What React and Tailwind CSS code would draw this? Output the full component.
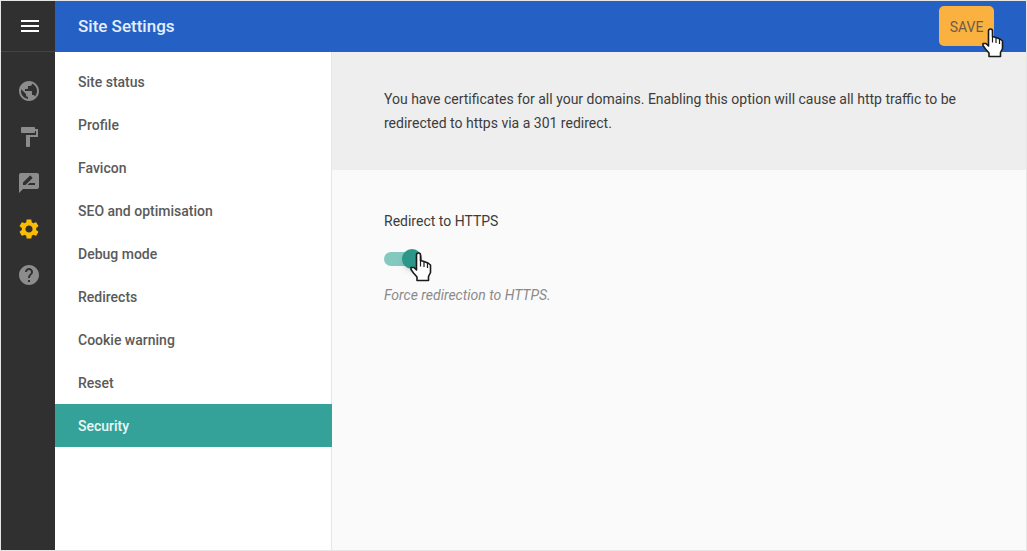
import React, { useState } from "react";
import { MdMenu, MdPublic, MdFormatPaint, MdRateReview, MdSettings, MdHelp } from "react-icons/md";

const tools = [
  { label: "Site", Icon: MdPublic },
  { label: "Design", Icon: MdFormatPaint },
  { label: "Content", Icon: MdRateReview },
  { label: "Settings", Icon: MdSettings },
  { label: "Help", Icon: MdHelp },
];

const sections = [
  "Site status",
  "Profile",
  "Favicon",
  "SEO and optimisation",
  "Debug mode",
  "Redirects",
  "Cookie warning",
  "Reset",
  "Security",
];

function HandPointer({ className }) {
  return (
    <svg viewBox="0 0 22 30" aria-hidden="true" className={`pointer-events-none absolute h-[30px] w-[22px] ${className}`}>
      <path
        d="M6.500 17V3Q6.500 1 8.500 1T10.500 3V8.500L14 9.500L18 11L20.500 13V20.500L18.500 24.500V28.500H7V25L3.500 21L1 17.500V15.500H4L6.500 18Z"
        fill="#fff"
        stroke="#1a1a1a"
        strokeWidth="1.600"
        strokeLinejoin="round"
      />
      <path d="M10.500 8.500V14.500M14 10V15M17.500 11V16" fill="none" stroke="#1a1a1a" strokeWidth="1.200" />
    </svg>
  );
}

export default function App() {
  const [active, setActive] = useState("Security");
  const [https, setHttps] = useState(true);

  return (
    <div className="flex min-h-screen border border-[#e6e6e6] bg-white font-['Roboto',sans-serif] text-sm text-[#3c3c3c]">
      <nav aria-label="Main" className="flex w-[54px] shrink-0 flex-col bg-[#303030]">
        <button type="button" aria-label="Menu" className="flex h-[51px] items-center justify-center border-b border-[#444] pl-1 text-white">
          <MdMenu className="size-6" />
        </button>
        <ul className="flex flex-col items-center gap-[22px] pt-[27px] pl-0.5">
          {tools.map(({ label, Icon }) => (
            <li key={label}>
              <a href="#" aria-label={label} className={label === "Settings" ? "block text-[#fbbc05]" : "block text-[#8c8c8c]"}>
                <Icon className="size-6" />
              </a>
            </li>
          ))}
        </ul>
      </nav>

      <div className="flex min-w-0 grow flex-col">
        <header className="flex h-[51px] items-center justify-between bg-[#2561c5] pr-8 pl-[23px]">
          <h1 className="text-[17px] font-medium text-[#e6eefb]">Site Settings</h1>
          <div className="relative pb-0.5">
            <button type="button" className="block h-10 w-[55px] rounded-[5px] bg-[#fbb140] pt-0.5 text-sm text-[#6b5c48]">SAVE</button>
            <HandPointer className="top-[22px] left-[43px]" />
          </div>
        </header>

        <div className="flex grow">
          <nav aria-label="Settings sections" className="w-[277px] shrink-0 border-r border-[#e6e6e6] pt-2">
            <ul>
              {sections.map((name) => (
                <li key={name}>
                  <a
                    href="#"
                    onClick={() => setActive(name)}
                    aria-current={active === name ? "page" : undefined}
                    className={
                      active === name
                        ? "-mr-px flex h-[43px] items-center bg-[#35a29a] pl-[23px] font-medium text-[#e9f8f6]"
                        : "flex h-[43px] items-center pl-[23px] font-medium text-[#5a5a5a]"
                    }
                  >
                    {name}
                  </a>
                </li>
              ))}
            </ul>
          </nav>

          <main className="min-w-0 grow bg-[#fafafa]">
            <p className="bg-[#eee] px-[52px] py-[35px] leading-6">
              You have certificates for all your domains. Enabling this option will cause all http traffic to be redirected to https via a 301 redirect.
            </p>
            <div className="flex flex-col items-start px-[52px] pt-[39px]">
              <label htmlFor="https" className="leading-6">Redirect to HTTPS</label>
              <div className="relative mt-4 flex h-5 w-9 items-center">
                <input
                  id="https"
                  type="checkbox"
                  role="switch"
                  checked={https}
                  onChange={(e) => setHttps(e.target.checked)}
                  className="peer h-3.5 w-9 appearance-none rounded-full bg-[#bbb] checked:bg-[#84c9c0]"
                />
                <span className="pointer-events-none absolute top-0 left-0 size-5 rounded-full bg-white shadow-md peer-checked:left-[18px] peer-checked:bg-[#2c9688]" />
                <HandPointer className="top-[3px] left-[26px]" />
              </div>
              <p className="mt-3.5 leading-6 text-[#8a8a8a] italic">Force redirection to HTTPS.</p>
            </div>
          </main>
        </div>
      </div>
    </div>
  );
}
